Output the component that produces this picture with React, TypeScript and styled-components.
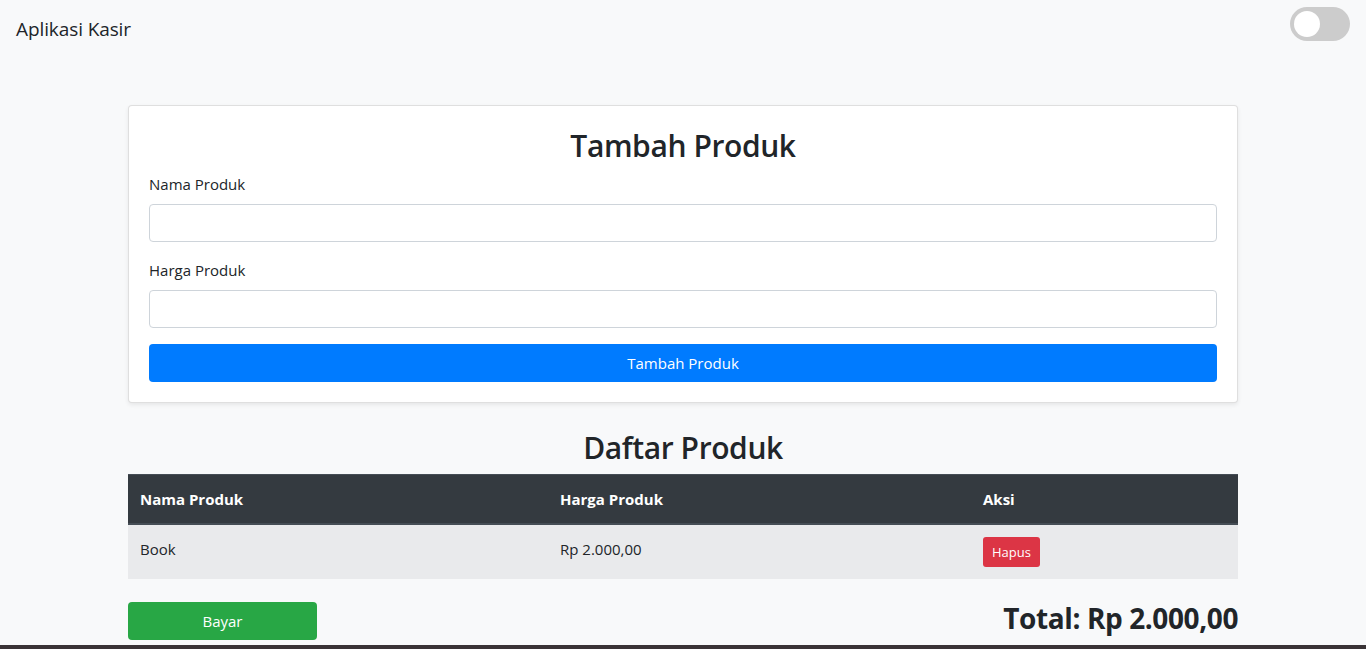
import React, { useState } from "react";
import styled, { createGlobalStyle } from "styled-components";

const GlobalStyle = createGlobalStyle`
  * { box-sizing: border-box; }
  body {
    margin: 0;
    background: #f8f9fa;
    color: #212529;
    font-family: "Open Sans", "Noto Sans", sans-serif;
    font-size: 16px;
    line-height: 1.5;
  }
`;

const Page = styled.div`
  min-height: 100vh;
  background: #f8f9fa;
`;

const Navbar = styled.header`
  display: flex;
  justify-content: space-between;
  align-items: flex-start;
  height: 57px;
  padding: 7px 16px 0 16px;
`;

const Brand = styled.span`
  font-size: 19px;
  line-height: 30px;
  margin-top: 7px;
  letter-spacing: -0.1px;
`;

const Switch = styled.button<{ on: boolean }>`
  position: relative;
  width: 60px;
  height: 34px;
  border: none;
  padding: 0;
  border-radius: 17px;
  background: ${({ on }) => (on ? "#2196f3" : "#ccc")};
  cursor: pointer;
  &::before {
    content: "";
    position: absolute;
    top: 4px;
    left: ${({ on }) => (on ? "30px" : "4px")};
    width: 26px;
    height: 26px;
    border-radius: 50%;
    background: #fff;
    transition: left 0.2s;
  }
`;

const Container = styled.main`
  width: 1110px;
  margin: 48px auto 0;
`;

const Card = styled.section`
  background: #fff;
  border: 1px solid rgba(0, 0, 0, 0.125);
  border-radius: 4px;
  box-shadow: 0 0.125rem 0.25rem rgba(0, 0, 0, 0.075);
  padding: 20px;
`;

const Heading = styled.h2`
  margin: 0 0 8px;
  font-size: 30px;
  font-weight: 600;
  line-height: 38px;
  text-align: center;
  letter-spacing: -0.4px;
  padding-top: 1px;
  height: 38px;
`;

const ListHeading = styled(Heading)`
  margin-top: 25px;
`;

const FormGroup = styled.div`
  margin-bottom: 16px;
`;

const Label = styled.label`
  display: block;
  margin-bottom: 8px;
  font-size: 15px;
  line-height: 24px;
  letter-spacing: 0;
`;

const Input = styled.input`
  display: block;
  width: 100%;
  height: 38px;
  padding: 6px 12px;
  border: 1px solid #ced4da;
  border-radius: 4px;
  font: inherit;
  color: #495057;
  background: #fff;
`;

const Button = styled.button<{ tone: "primary" | "success" | "danger"; small?: boolean }>`
  display: inline-block;
  border: 1px solid transparent;
  color: #fff;
  font-family: inherit;
  cursor: pointer;
  background: ${({ tone }) =>
    tone === "primary" ? "#007bff" : tone === "success" ? "#28a745" : "#dc3545"};
  font-size: ${({ small }) => (small ? "13px" : "15px")};
  height: ${({ small }) => (small ? "30px" : "38px")};
  padding: ${({ small }) => (small ? "0 8px" : "0 12px")};
  border-radius: ${({ small }) => (small ? "3px" : "4px")};
  letter-spacing: 0;
`;

const BlockButton = styled(Button)`
  display: block;
  width: 100%;
`;

const Table = styled.table`
  width: 100%;
  border-collapse: collapse;
  table-layout: fixed;
  th,
  td {
    padding: 12px;
    text-align: left;
    vertical-align: top;
    line-height: 24px;
  }
  th {
    background: #343a40;
    color: #fff;
    font-size: 15px;
    font-weight: 700;
    border-top: 1px solid #454d55;
    border-bottom: 2px solid #454d55;
    letter-spacing: 0;
  }
  td {
    background: #e9eaec;
    font-size: 15px;
    letter-spacing: 0;
  }
`;

const Footer = styled.div`
  display: flex;
  justify-content: space-between;
  align-items: center;
  margin-top: 23px;
`;

const PayButton = styled(Button)`
  width: 189px;
`;

const Total = styled.h3`
  margin: 0 0 4px;
  font-size: 28px;
  font-weight: 700;
  line-height: 1.2;
  letter-spacing: -0.4px;
`;

const TaskStrip = styled.div`
  position: fixed;
  left: 0;
  right: 0;
  bottom: 0;
  height: 4px;
  background: #3a3336;
`;

type Product = { id: number; name: string; price: number };

const rupiah = (n: number) =>
  "Rp " +
  n
    .toFixed(2)
    .replace(".", ",")
    .replace(/\B(?=(\d{3})+(?!\d))/g, ".");

export default function App() {
  const [dark, setDark] = useState(false);
  const [products] = useState<Product[]>([{ id: 1, name: "Book", price: 2000 }]);
  const total = products.reduce((s, p) => s + p.price, 0);

  return (
    <Page>
      <GlobalStyle />
      <Navbar>
        <Brand>Aplikasi Kasir</Brand>
        <Switch on={dark} onClick={() => setDark(!dark)} aria-label="toggle" />
      </Navbar>
      <Container>
        <Card>
          <Heading>Tambah Produk</Heading>
          <FormGroup>
            <Label htmlFor="nama">Nama Produk</Label>
            <Input id="nama" />
          </FormGroup>
          <FormGroup>
            <Label htmlFor="harga">Harga Produk</Label>
            <Input id="harga" />
          </FormGroup>
          <BlockButton tone="primary">Tambah Produk</BlockButton>
        </Card>

        <ListHeading>Daftar Produk</ListHeading>
        <Table>
          <colgroup>
            <col style={{ width: 420 }} />
            <col style={{ width: 423 }} />
            <col style={{ width: 267 }} />
          </colgroup>
          <thead>
            <tr>
              <th>Nama Produk</th>
              <th>Harga Produk</th>
              <th>Aksi</th>
            </tr>
          </thead>
          <tbody>
            {products.map((p) => (
              <tr key={p.id}>
                <td>{p.name}</td>
                <td>{rupiah(p.price)}</td>
                <td>
                  <Button tone="danger" small>
                    Hapus
                  </Button>
                </td>
              </tr>
            ))}
          </tbody>
        </Table>

        <Footer>
          <PayButton tone="success">Bayar</PayButton>
          <Total>Total: {rupiah(total)}</Total>
        </Footer>
      </Container>
      <TaskStrip />
    </Page>
  );
}
